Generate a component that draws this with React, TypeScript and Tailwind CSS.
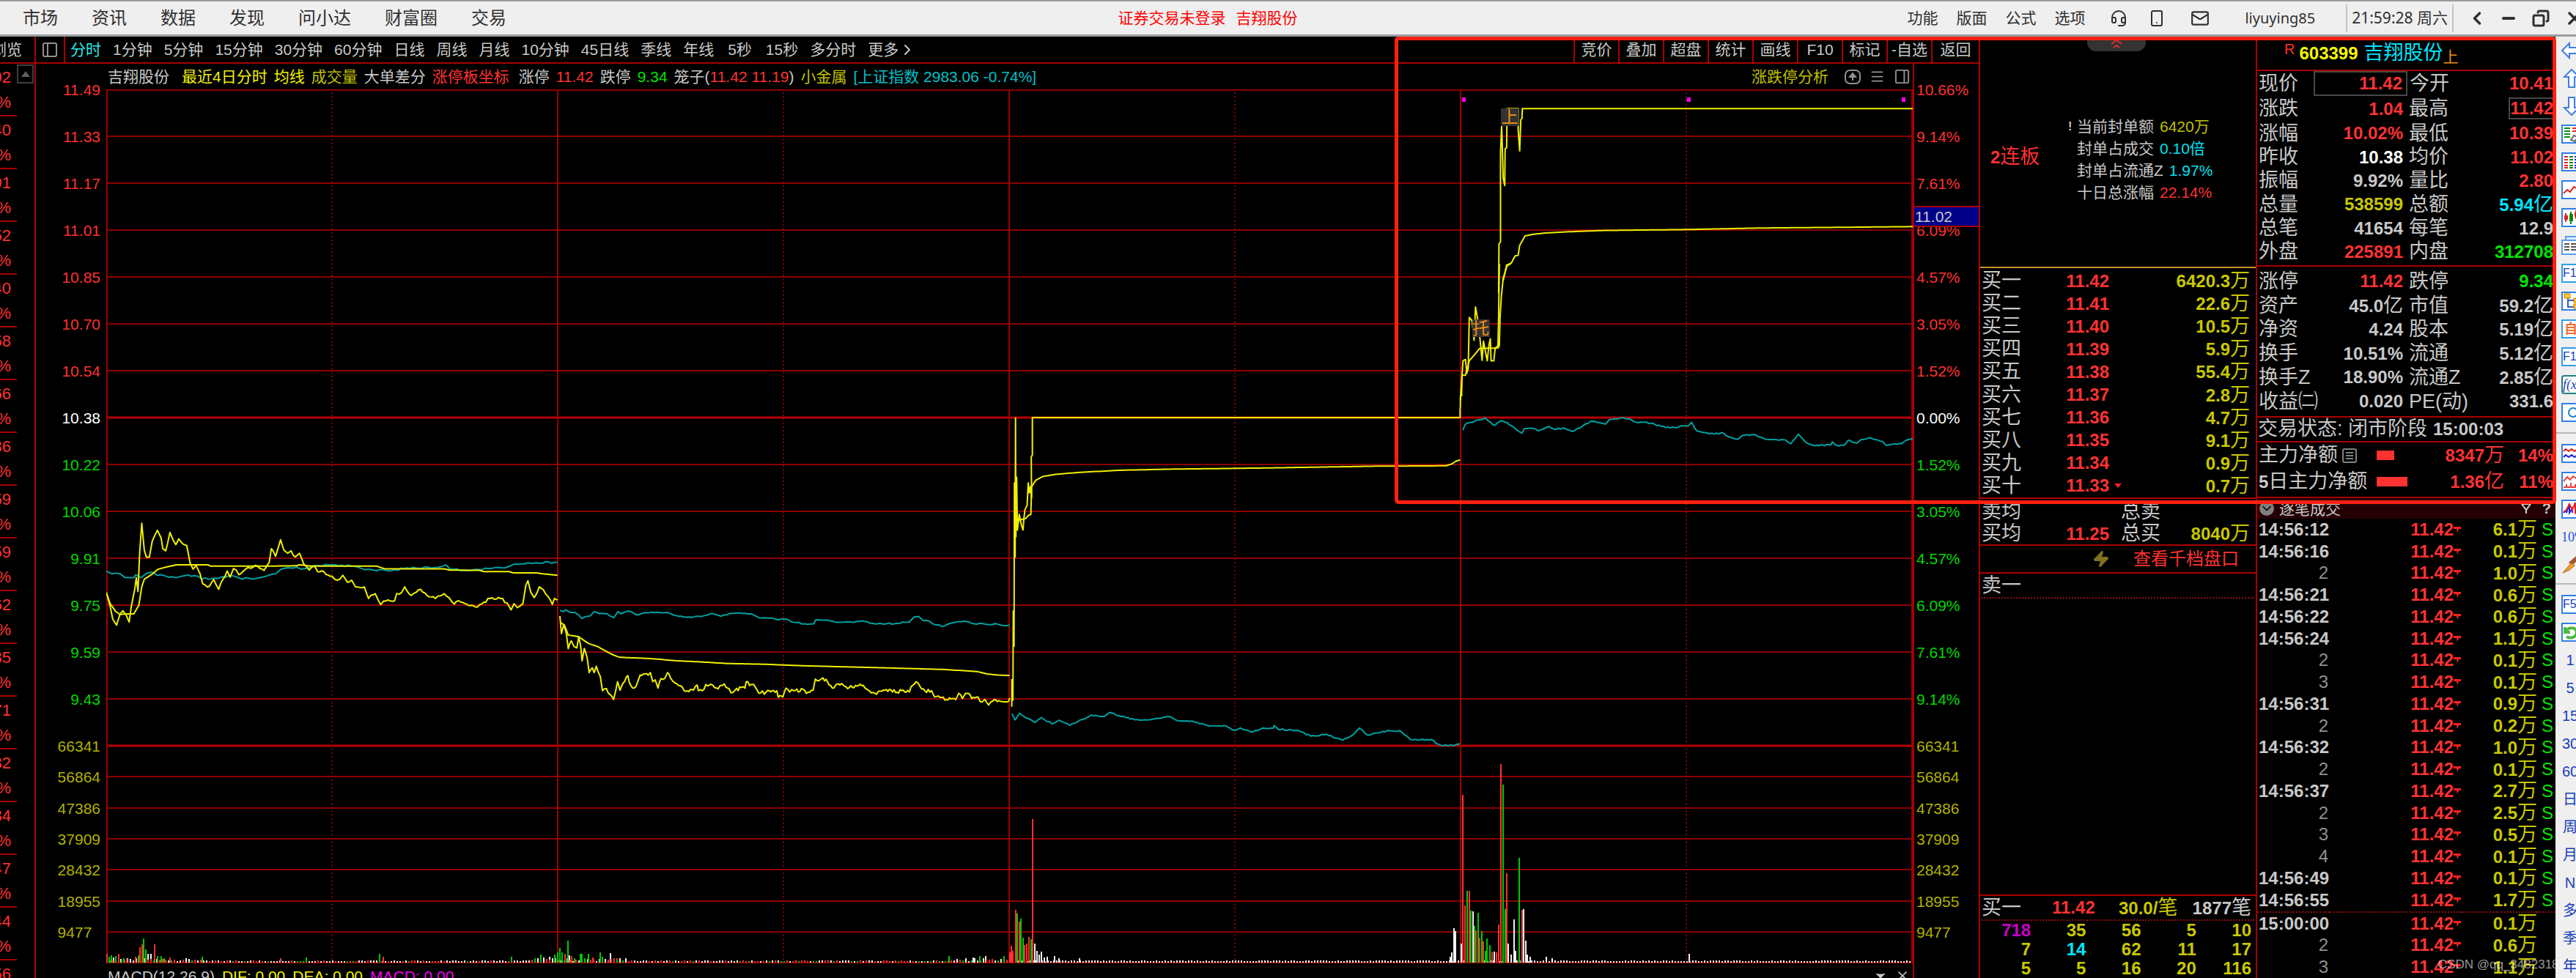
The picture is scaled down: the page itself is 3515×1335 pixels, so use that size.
import React from "react";
import { Headset, Smartphone, Mail, ChevronLeft, ChevronRight, Minus, Copy, X, ChevronDown, Zap, PanelLeft, PanelRight, Menu } from "lucide-react";

type Pt = [number, number];

const MENU = ["市场", "资讯", "数据", "发现", "问小达", "财富圈", "交易"];
const PERIODS = ["1分钟", "5分钟", "15分钟", "30分钟", "60分钟", "日线", "周线", "月线", "10分钟", "45日线", "季线", "年线", "5秒", "15秒", "多分时"];
const ACTIONS = ["竞价", "叠加", "超盘", "统计", "画线", "F10", "标记", "-自选"];
const WATCH = ["92", "40", "91", "52", "40", "58", "66", "36", "59", "59", "62", "35", "71", "32", "34", "47", "44", "56"];

const LEFT_AXIS: [string, string][] = [
  ["11.49", "text-[#ff3030]"], ["11.33", "text-[#ff3030]"], ["11.17", "text-[#ff3030]"], ["11.01", "text-[#ff3030]"],
  ["10.85", "text-[#ff3030]"], ["10.70", "text-[#ff3030]"], ["10.54", "text-[#ff3030]"], ["10.38", "text-white"],
  ["10.22", "text-[#00d800]"], ["10.06", "text-[#00d800]"], ["9.91", "text-[#00d800]"], ["9.75", "text-[#00d800]"],
  ["9.59", "text-[#00d800]"], ["9.43", "text-[#00d800]"],
];
const RIGHT_AXIS: [string, string][] = [
  ["10.66%", "text-[#ff3030]"], ["9.14%", "text-[#ff3030]"], ["7.61%", "text-[#ff3030]"], ["6.09%", "text-[#ff3030]"],
  ["4.57%", "text-[#ff3030]"], ["3.05%", "text-[#ff3030]"], ["1.52%", "text-[#ff3030]"], ["0.00%", "text-white"],
  ["1.52%", "text-[#00d800]"], ["3.05%", "text-[#00d800]"], ["4.57%", "text-[#00d800]"], ["6.09%", "text-[#00d800]"],
  ["7.61%", "text-[#00d800]"], ["9.14%", "text-[#00d800]"],
];
const VOLUMES = ["66341", "56864", "47386", "37909", "28432", "18955", "9477"];

const BIDS: [string, string, string][] = [
  ["买一", "11.42", "6420.3万"], ["买二", "11.41", "22.6万"], ["买三", "11.40", "10.5万"], ["买四", "11.39", "5.9万"],
  ["买五", "11.38", "55.4万"], ["买六", "11.37", "2.8万"], ["买七", "11.36", "4.7万"], ["买八", "11.35", "9.1万"],
  ["买九", "11.34", "0.9万"], ["买十", "11.33", "0.7万"],
];

const RED = "text-[#ff3232]";
const GRAY = "text-[#c8c8c8]";
const YEL = "text-[#c8c800]";
const GRN = "text-[#00e600]";
const CYAN = "text-[#00e6ff]";

type Quote = [string, string, string, string, string, string];
const QUOTES_A: Quote[] = [
  ["现价", "11.42", RED, "今开", "10.41", RED],
  ["涨跌", "1.04", RED, "最高", "11.42", RED],
  ["涨幅", "10.02%", RED, "最低", "10.39", RED],
  ["昨收", "10.38", "text-white", "均价", "11.02", RED],
  ["振幅", "9.92%", GRAY, "量比", "2.80", RED],
  ["总量", "538599", YEL, "总额", "5.94亿", CYAN],
  ["总笔", "41654", GRAY, "每笔", "12.9", GRAY],
  ["外盘", "225891", RED, "内盘", "312708", GRN],
];
const QUOTES_B: Quote[] = [
  ["涨停", "11.42", RED, "跌停", "9.34", GRN],
  ["资产", "45.0亿", GRAY, "市值", "59.2亿", GRAY],
  ["净资", "4.24", GRAY, "股本", "5.19亿", GRAY],
  ["换手", "10.51%", GRAY, "流通", "5.12亿", GRAY],
  ["换手Z", "18.90%", GRAY, "流通Z", "2.85亿", GRAY],
  ["收益㈡", "0.020", GRAY, "PE(动)", "331.6", GRAY],
];

const TICKS: [string, string, string][] = [
  ["14:56:12", "6.1万", "S"], ["14:56:16", "0.1万", "S"], ["2", "1.0万", "S"], ["14:56:21", "0.6万", "S"],
  ["14:56:22", "0.6万", "S"], ["14:56:24", "1.1万", "S"], ["2", "0.1万", "S"], ["3", "0.1万", "S"],
  ["14:56:31", "0.9万", "S"], ["2", "0.2万", "S"], ["14:56:32", "1.0万", "S"], ["2", "0.1万", "S"],
  ["14:56:37", "2.7万", "S"], ["2", "2.5万", "S"], ["3", "0.5万", "S"], ["4", "0.1万", "S"],
  ["14:56:49", "0.1万", "S"], ["14:56:55", "1.7万", "S"], ["15:00:00", "0.1万", ""], ["2", "0.6万", ""], ["3", "1.1万", ""],
];

/* ---------- chart helpers ---------- */

function noise(n: number) {
  const v = Math.sin(n * 12.9898) * 43758.5453;
  return v - Math.floor(v);
}

/** Joins the key points with small steps in between, as minute data has. */
function trace(pts: Pt[], amp = 0, step = 8) {
  let d = "M" + pts[0].join(" ");
  for (let i = 1; i < pts.length; i++) {
    const [x0, y0] = pts[i - 1];
    const [x1, y1] = pts[i];
    const n = Math.max(1, Math.floor((x1 - x0) / step));
    for (let k = 1; k <= n; k++) {
      const t = k / n;
      const wob = k < n ? (noise(x0 + k * 7.3) - 0.5) * 2 * amp : 0;
      d += `L${(x0 + (x1 - x0) * t).toFixed(1)} ${(y0 + (y1 - y0) * t + wob).toFixed(1)}`;
    }
  }
  return d;
}

const D1_PRICE: Pt[] = [[253,308],[262,355],[268,395],[277,415],[285,380],[292,368],[300,382],[307,405],[312,355],[320,300],[324,260],[328,305],[332,180],[337,82],[343,170],[348,193],[355,193],[362,140],[374,105],[383,130],[387,165],[394,172],[398,150],[404,112],[411,135],[418,152],[425,133],[435,150],[444,155],[452,212],[459,232],[466,220],[475,245],[482,280],[498,288],[508,266],[520,298],[530,265],[540,238],[547,258],[555,230],[568,250],[590,226],[612,222],[628,236],[640,210],[645,165],[655,190],[667,136],[675,170],[684,180],[692,172],[702,192],[712,180],[722,215],[735,235],[748,222],[755,240],[770,240],[785,255],[800,268],[808,265],[815,252],[826,275],[836,268],[845,290],[866,290],[876,328],[892,312],[905,348],[912,336],[938,336],[943,312],[955,308],[962,290],[978,318],[1000,298],[1015,318],[1035,328],[1056,312],[1080,346],[1090,335],[1110,347],[1135,356],[1150,340],[1165,328],[1190,328],[1205,342],[1215,365],[1222,345],[1230,358],[1243,345],[1250,285],[1255,270],[1262,308],[1270,325],[1282,290],[1292,300],[1302,320],[1313,347],[1318,328],[1325,333]];
const D1_AVG: Pt[] = [[253,310],[262,345],[275,370],[285,380],[305,378],[318,378],[330,350],[337,290],[343,265],[360,250],[375,233],[395,225],[420,218],[495,218],[500,222],[630,222],[640,222],[705,221],[712,218],[740,222],[895,222],[915,231],[1055,231],[1070,235],[1140,236],[1150,240],[1210,240],[1220,244],[1275,244],[1290,247],[1325,252]];
const D1_INDEX: Pt[] = [[253,238],[268,247],[285,247],[298,260],[318,260],[323,250],[335,260],[348,246],[362,242],[375,252],[392,254],[418,260],[440,253],[462,253],[480,264],[520,262],[545,253],[570,262],[605,264],[630,256],[655,247],[668,232],[690,228],[705,225],[715,232],[735,228],[750,220],[790,218],[835,222],[860,230],[925,238],[960,230],[1040,226],[1060,218],[1070,232],[1110,236],[1160,230],[1200,228],[1218,218],[1255,211],[1325,210]];

const D2_INDEX: Pt[] = [[57,150],[68,155],[75,148],[90,158],[105,158],[118,168],[128,182],[138,175],[155,172],[168,155],[185,163],[210,163],[232,178],[245,155],[255,163],[275,153],[310,168],[335,158],[405,158],[425,168],[460,176],[515,174],[545,163],[580,173],[605,163],[640,160],[675,163],[705,180],[735,180],[765,187],[790,184],[815,196],[850,202],[880,202],[886,187],[925,188],[950,196],[1045,193],[1080,203],[1150,200],[1190,195],[1205,176],[1220,174],[1235,190],[1255,192],[1275,206],[1297,212],[1330,198],[1375,193],[1400,202],[1475,203],[1485,207],[1515,207]];
const D2_AVG: Pt[] = [[57,195],[72,208],[84,245],[118,252],[150,278],[180,290],[210,310],[230,322],[250,331],[350,336],[430,344],[512,349],[600,355],[720,358],[850,364],[1020,369],[1180,374],[1300,378],[1410,386],[1440,395],[1480,400],[1515,401]];
const D2_PRICE: Pt[] = [[57,172],[62,240],[70,205],[78,240],[84,298],[94,268],[103,290],[112,295],[118,252],[124,285],[129,345],[136,297],[145,330],[152,390],[162,372],[168,390],[175,366],[188,405],[195,460],[208,452],[220,475],[231,494],[237,465],[244,425],[252,458],[262,430],[277,402],[287,440],[297,450],[308,430],[317,400],[343,400],[350,390],[358,425],[366,418],[375,450],[385,413],[397,413],[406,390],[416,412],[430,430],[442,440],[460,460],[490,458],[502,438],[506,460],[518,460],[530,436],[552,438],[565,450],[590,434],[605,452],[612,468],[625,458],[645,448],[657,450],[661,425],[672,440],[685,436],[702,470],[725,466],[745,460],[760,460],[765,485],[780,484],[790,450],[802,465],[815,460],[850,458],[856,470],[878,458],[885,415],[892,422],[905,414],[920,416],[940,450],[955,434],[975,438],[990,452],[1015,440],[1035,440],[1055,456],[1078,470],[1100,462],[1125,455],[1150,466],[1165,460],[1190,465],[1200,440],[1212,425],[1225,445],[1240,460],[1262,460],[1272,484],[1295,486],[1310,494],[1340,494],[1350,470],[1362,490],[1372,470],[1387,476],[1392,490],[1412,484],[1420,502],[1435,494],[1447,515],[1460,500],[1480,498],[1492,502],[1512,500],[1515,488]];

const D3_PRICE: Pt[] = [[158,838],[158,765],[161,820],[162,580],[164,675],[165,235],[167,435],[168,60],[169,380],[171,220],[173,362],[178,320],[184,350],[188,362],[190,335],[193,308],[199,295],[202,235],[205,262],[208,245],[211,275],[210,165],[213,160],[213,59],[1357,59],[1357,35]];
const D3_AVG: Pt[] = [[168,310],[170,345],[178,335],[195,331],[203,322],[209,320],[211,245],[222,228],[240,218],[275,212],[350,206],[450,201],[580,198],[830,195],[1130,190],[1320,189],[1335,184],[1345,177],[1357,173]];
const D3_INDEX: Pt[] = [[158,856],[167,873],[179,855],[195,867],[220,880],[237,867],[266,884],[285,874],[313,888],[345,872],[370,860],[405,864],[420,853],[450,864],[500,874],[583,865],[605,876],[640,876],[685,890],[725,888],[752,901],[770,895],[802,906],[830,895],[858,895],[860,888],[870,898],[925,902],[958,917],[1000,912],[1042,928],[1068,915],[1088,895],[1110,914],[1150,904],[1195,902],[1225,926],[1280,926],[1300,939],[1325,943],[1357,938]];

const D4_PRICE: Pt[] = [[69,318],[70,290],[73,290],[74,245],[77,213],[84,210],[88,240],[92,230],[95,118],[103,125],[109,168],[113,95],[117,112],[122,135],[128,180],[132,212],[136,170],[141,190],[147,213],[152,178],[156,165],[158,213],[166,213],[170,185],[178,180],[180,115],[182,0]];
const D4_RISE: Pt[] = [[277,1200],[278,1000],[282,990],[282,625],[285,515],[287,620],[289,730],[293,760],[294,610],[298,605],[299,445],[328,445],[328,530],[332,618],[333,575],[335,490],[338,485],[339,445],[1358,445]];
const D4_AVG: Pt[] = [[69,300],[74,245],[84,245],[95,213],[110,200],[125,186],[178,185],[182,180],[184,118],[188,70],[193,32],[204,5],[215,0]];
const D4_AVG_LATE: Pt[] = [[289,1150],[298,1085],[310,1078],[320,1048],[328,1046],[332,1005],[346,966],[365,960],[400,954],[445,950],[545,944],[770,940],[950,934],[1235,930],[1358,928]];
const D4_INDEX: Pt[] = [[76,365],[84,352],[105,348],[118,343],[132,342],[140,338],[150,345],[168,355],[185,345],[205,349],[225,360],[247,372],[255,362],[275,361],[295,367],[325,357],[340,363],[370,361],[392,368],[420,358],[445,346],[490,352],[500,342],[535,338],[560,341],[578,348],[620,350],[650,357],[690,360],[712,356],[728,356],[738,348],[752,366],[790,373],[830,372],[845,380],[872,385],[885,377],[920,375],[950,385],[1010,387],[1025,395],[1047,374],[1068,392],[1090,399],[1140,398],[1145,391],[1158,399],[1178,399],[1190,388],[1215,394],[1228,386],[1255,382],[1290,390],[1302,399],[1345,395],[1365,386],[1377,385]];

type Bar = [number, number, "r" | "g" | "w"];
const BIG_BARS: Bar[] = [
  [1,12,"r"],[4,8,"g"],[7,10,"g"],[10,7,"w"],[13,9,"g"],[17,12,"r"],[20,5,"w"],[24,6,"g"],[28,5,"r"],[40,8,"r"],[44,10,"g"],[46,21,"r"],[49,25,"r"],[51,33,"g"],[54,18,"g"],[57,12,"w"],[61,12,"w"],[66,25,"r"],[70,9,"g"],[75,9,"g"],[79,6,"g"],[87,7,"r"],
  [131,8,"g"],[238,6,"r"],[273,7,"g"],[373,12,"g"],[378,8,"r"],[553,8,"g"],[585,6,"g"],[593,11,"g"],[597,7,"w"],[605,8,"w"],[612,11,"g"],
  [616,14,"g"],[619,20,"g"],[622,14,"g"],[626,12,"r"],[630,30,"g"],[632,10,"w"],[635,9,"r"],[639,6,"g"],[647,12,"g"],[649,12,"g"],[653,6,"g"],[658,12,"g"],[664,7,"r"],[674,14,"g"],[677,8,"g"],[688,13,"w"],[693,6,"r"],[697,6,"r"],
  [1150,9,"g"],[1183,7,"w"],[1192,9,"g"],[1200,9,"w"],[1225,9,"g"],
  [1233,14,"r"],[1235,23,"r"],[1237,16,"r"],[1241,72,"r"],[1243,67,"g"],[1246,56,"r"],[1248,60,"g"],[1251,34,"g"],[1253,24,"r"],[1256,26,"r"],[1259,35,"r"],[1262,32,"g"],[1264,196,"r"],[1267,26,"w"],[1270,16,"w"],[1273,11,"w"],[1276,15,"w"],[1280,7,"w"],[1284,8,"w"],[1294,9,"w"],[1300,6,"w"],[1328,6,"w"],
  [1834,8,"w"],[1836,14,"w"],[1839,47,"w"],[1841,43,"w"],[1849,26,"w"],[1851,229,"r"],[1854,78,"r"],[1857,98,"g"],[1860,98,"r"],[1862,71,"g"],[1865,70,"w"],[1867,50,"g"],[1869,44,"r"],[1872,68,"g"],[1874,34,"r"],[1877,43,"g"],[1879,29,"r"],[1882,16,"g"],[1884,33,"g"],[1888,24,"g"],[1891,15,"r"],[1894,15,"w"],[1897,14,"r"],[1900,52,"r"],[1903,271,"r"],[1906,243,"g"],[1909,73,"g"],[1911,122,"r"],[1913,26,"w"],[1917,11,"w"],[1921,59,"w"],[1923,16,"w"],[1928,143,"g"],[1932,72,"r"],[1934,73,"w"],[1937,30,"w"],[1939,11,"w"],[1943,8,"w"],[1965,8,"w"],[1973,6,"w"],[2160,12,"w"],
];
const FLOOR_BARS: Bar[] = Array.from({ length: 616 }, (_, i): Bar => {
  const x = i * 4 + 1;
  const n = noise(i + 3);
  const late = x > 1240;
  const busy = !late && (x < 130 || (x > 580 && x < 710) || x > 1160);
  const h = busy ? 2 + n * 4 : 2 + n;
  const c = late || n > 0.72 ? "w" : n > 0.4 ? "r" : n > 0.28 ? "g" : "w";
  return [x, Math.round(h), c];
});
const barPath = (c: string) =>
  [...FLOOR_BARS, ...BIG_BARS].filter((b) => b[2] === c).map(([x, h]) => `M${x} 1192v-${h}`).join("");

function Curve({ d, color }: { d: string; color: string }) {
  return <path d={d} stroke={color} strokeWidth={2} fill="none" vectorEffect="non-scaling-stroke" strokeLinejoin="round" />;
}

function Chart() {
  const days = [1, 616, 1232, 1848, 2464];
  const mids = [308, 924, 1540, 2156];
  const Y = "#f0f000";
  const C = "#00a0a0";
  return (
    <svg viewBox="0 0 2465 1193" preserveAspectRatio="none" className="block h-[1193px] w-full" role="img" aria-label="分时走势">
      {Array.from({ length: 15 }, (_, i) => (
        <path key={i} d={`M0 ${i === 0 ? 1 : i * 64}H2465`} stroke={i === 7 || i === 14 ? "#b80000" : "#8c0000"} strokeWidth={i === 7 || i === 14 ? 3 : 2} />
      ))}
      {Array.from({ length: 7 }, (_, i) => (
        <path key={i} d={`M0 ${Math.round(896 + (i + 1) * 42.3)}H2465`} stroke="#8c0000" strokeWidth={2} />
      ))}
      {days.map((x) => <path key={x} d={`M${x} 0V1193`} stroke="#9c0000" strokeWidth={2} />)}
      {mids.map((x) => <path key={x} d={`M${x} 4V1193`} stroke="#8c0000" strokeWidth={2} strokeDasharray="2 3.3" />)}
      <path d={barPath("w")} stroke="#f0f0f0" strokeWidth={2} />
      <path d={barPath("r")} stroke="#ff3232" strokeWidth={2} />
      <path d={barPath("g")} stroke="#00c800" strokeWidth={2} />
      <g transform="translate(-145 558) scale(0.574 0.4177)">
        <Curve d={trace(D1_INDEX, 3, 7)} color={C} />
        <Curve d={trace(D1_AVG)} color={Y} />
        <Curve d={trace(D1_PRICE, 5, 5)} color={Y} />
      </g>
      <g transform="translate(595 658) scale(0.4209 0.354)">
        <Curve d={trace(D2_INDEX, 3, 8)} color={C} />
        <Curve d={trace(D2_AVG)} color={Y} />
        <Curve d={trace(D2_PRICE, 7, 5)} color={Y} />
      </g>
      <g transform="translate(1155 418) scale(0.5102 0.507)">
        <Curve d={trace(D3_INDEX, 2, 6)} color={C} />
        <Curve d={trace(D3_AVG)} color={Y} />
        <Curve d={trace(D3_PRICE)} color={Y} />
      </g>
      <g transform="translate(1815 238) scale(0.4719 0.6218)">
        <Curve d={trace(D4_INDEX, 1.5, 6)} color={C} />
        <Curve d={trace(D4_AVG)} color={Y} />
        <Curve d={trace(D4_PRICE)} color={Y} />
      </g>
      <g transform="translate(1755 -122) scale(0.523 0.3333)">
        <Curve d={trace(D4_RISE)} color={Y} />
        <Curve d={trace(D4_AVG_LATE)} color={Y} />
      </g>
      {[1850, 2157, 2450].map((x) => <rect key={x} x={x} y={11} width={5} height={6} fill="#ff00ff" />)}
    </svg>
  );
}

/* ---------- small parts ---------- */

/** Figures are bold, Chinese units are regular and slightly larger. */
function Mixed({ text }: { text: string }) {
  return (
    <>
      {text.split(/([\u4e00-\u9fff]+)/).filter(Boolean).map((s, i) =>
        /[\u4e00-\u9fff]/.test(s)
          ? <span key={i} className="text-[27px] font-normal">{s}</span>
          : <span key={i} className="text-[24px] font-bold">{s}</span>
      )}
    </>
  );
}

function Mark({ label, children }: { label: string; children: React.ReactNode }) {
  return (
    <button aria-label={label} className="flex h-[38px] shrink-0 items-center">
      <svg viewBox="0 0 28 26" className="h-[26px] w-[28px] shrink-0" fill="none">{children}</svg>
    </button>
  );
}

const Frame = ({ color = "#2f7fe8" }: { color?: string }) => <rect x="1" y="1" width="27" height="24" fill="#fff" stroke={color} strokeWidth="2" />;

function ToolStrip() {
  const arrow = { fill: "#fff", stroke: "#3f7fe0", strokeWidth: 2 };
  return (
    <aside className="flex w-[28px] shrink-0 flex-col overflow-hidden bg-[#efefef]">
      <div className="flex flex-col items-start pl-[8px] text-[22px] leading-none text-[#1840b8]">
        <Mark label="后退"><path {...arrow} d="M1 13 11 3v6h16v8H11v6z" /></Mark>
        <Mark label="上移"><path {...arrow} d="M14 1 24 11h-6v14h-8V11H4z" /></Mark>
        <Mark label="下移"><path {...arrow} d="M14 25 24 15h-6V1h-8v14H4z" /></Mark>
        <Mark label="报价"><Frame /><path d="M4 5h8M4 9h8M4 13h8M4 17h8" stroke="#0a8a0a" strokeWidth="2" /><path d="M15 5h8M15 9h8" stroke="#e02020" strokeWidth="2" /><path d="M13 21l4-6 5 2-3 6z" stroke="#666" strokeWidth="2" /></Mark>
        <Mark label="行情"><Frame /><path d="M4 6h5M4 10h5M4 14h5M4 18h5M4 21h5" stroke="#e02020" strokeWidth="2" /><path d="M11 6h5M11 10h5M11 14h5M11 18h5M11 21h5" stroke="#0a8a0a" strokeWidth="2" /><path d="M18 6h5M18 10h5M18 14h5M18 18h5M18 21h5" stroke="#2020e0" strokeWidth="2" /></Mark>
        <Mark label="分时图"><Frame /><path d="M3 18l5-5 4 3 5-7 4 2 4-5" stroke="#e02020" strokeWidth="2" /></Mark>
        <Mark label="K线图"><Frame /><path d="M6 7v12M20 3v12" stroke="#e02020" strokeWidth="2" /><path d="M4 10h5v6H4zM18 6h5v6h-5z" fill="#e02020" /><path d="M13 5v17" stroke="#0a8a0a" strokeWidth="2" /><path d="M11 8h5v10h-5z" fill="#0a8a0a" /></Mark>
        <Mark label="资讯"><rect x="6" y="1" width="22" height="20" fill="#dcebff" stroke="#5b9cf0" strokeWidth="2" /><rect x="1" y="6" width="26" height="19" fill="#fff" stroke="#5b9cf0" strokeWidth="2" /><path d="M4 11h7M13 11h7M4 15h7M13 15h7M4 19h7M13 19h7" stroke="#555" strokeWidth="2" /></Mark>
        <button className="my-[6px] h-[26px] w-[32px] shrink-0 border-2 border-[#2f9fe8] bg-white text-left text-[16px] leading-[22px]">F10</button>
        <Mark label="板块"><Frame /><path d="M9 6v15h9M9 12h9" stroke="#3060c0" strokeWidth="2" /><path d="M4 3h8v6H4zM17 9h8v6h-8zM17 17h8v6h-8z" fill="#ffc830" stroke="#c08000" /></Mark>
        <button className="my-[6px] h-[26px] w-[32px] shrink-0 border-2 border-[#2f9fe8] bg-white pl-[2px] text-left text-[18px] font-bold leading-[22px] text-[#f07030]">自</button>
        <button className="my-[6px] h-[26px] w-[32px] shrink-0 border-2 border-[#2f9fe8] bg-white text-left text-[16px] leading-[22px]">F12</button>
        <button className="my-[6px] h-[26px] w-[32px] shrink-0 rounded border-2 border-[#208080] bg-white text-left font-['Liberation_Serif',serif] text-[18px] italic leading-[22px]">f(x)</button>
        <Mark label="刷新"><Frame /><circle cx="16" cy="13" r="6" stroke="#2080c0" strokeWidth="2" /></Mark>
      </div>
      <hr className="my-[8px] border-t-2 border-[#b8b8b8]" />
      <div className="flex flex-col items-start pl-[8px] text-[22px] leading-none text-[#1840b8]">
        <Mark label="双线"><Frame /><path d="M3 10l3-3 4 3 4-3 4 3 4-3 4 3" stroke="#e02020" strokeWidth="2" /><path d="M3 18l3-3 4 3 4-3 4 3 4-3 4 3" stroke="#2020e0" strokeWidth="2" /></Mark>
        <Mark label="面积"><Frame /><path d="M3 13l5-6 4 4 4-5 9 6M3 21h22M7 21v-4M13 21v-6M19 21v-4" stroke="#e84040" strokeWidth="2" /></Mark>
        <Mark label="波动"><Frame /><path d="M3 18l4-4v4l4-12v12l4-6v6" stroke="#2020e0" strokeWidth="2" /><path d="M3 17l4-3 4-8 4 8 4-10v14l6-6" stroke="#e02020" strokeWidth="2" /></Mark>
        <button className="h-[38px] font-['Liberation_Sans_Narrow','Liberation_Serif',serif] text-[18px] text-[#2850e0]">10%</button>
        <Mark label="画笔"><path d="M26 0 12 12" stroke="#a05838" strokeWidth="6" /><path d="M14 10 2 24l9-4 7-6z" fill="#f0a020" stroke="#a86010" /></Mark>
      </div>
      <hr className="mb-[8px] mt-[6px] border-t-2 border-[#b8b8b8]" />
      <div className="flex flex-col items-start pl-[8px] text-[22px] leading-none text-[#1840b8]">
        <button className="my-[6px] h-[26px] w-[32px] shrink-0 border-2 border-[#2f7fe8] bg-white text-left text-[16px] leading-[22px]">F5</button>
        <Mark label="更新"><Frame /><path d="M5 6v7h7M6 12c4-7 14-6 15 1-1 8-9 9-14 6" stroke="#50b840" strokeWidth="4" /></Mark>
        {["1", "5", "15", "30", "60", "日", "周", "月", "N", "多", "季", "年"].map((t) => (
          <button key={t} className="flex h-[38px] w-[24px] shrink-0 items-center justify-center whitespace-nowrap text-[20px]">{t}</button>
        ))}
      </div>
    </aside>
  );
}

function TitleBar() {
  return (
    <header className="flex h-[50px] shrink-0 items-center whitespace-nowrap border-b-[3px] border-t-2 border-b-[#9aa0a0] border-t-[#a0989c] bg-[#efefef] text-[21px] text-[#303030]">
      <nav className="flex w-[43.4%] shrink-0 items-center gap-[46px] pl-[31px] text-[24px]">
        {MENU.map((m) => <button key={m}>{m}</button>)}
      </nav>
      <p className="flex flex-1 gap-[14px] text-[#ff0000]"><span>证券交易未登录</span><span>吉翔股份</span></p>
      <div className="flex h-full shrink-0 items-center justify-end">
        <div className="flex gap-[25px]">{["功能", "版面", "公式", "选项"].map((m) => <button key={m}>{m}</button>)}</div>
        <button aria-label="客服" className="ml-[34px]"><Headset size={24} /></button>
        <button aria-label="手机" className="ml-[28px]"><Smartphone size={24} /></button>
        <button aria-label="消息" className="ml-[34px]"><Mail size={26} /></button>
        <button className="ml-[48px] font-['Noto_Sans',sans-serif] text-[20px]">liyuying85</button>
        <time className="ml-[42px] flex h-[38px] items-center border-x-2 border-[#c4c4c4] px-[6px] font-['Noto_Sans','Noto_Sans_CJK_SC',sans-serif] text-[21px]">21:59:28 周六</time>
        <button aria-label="收起" className="ml-[18px]"><ChevronLeft size={28} strokeWidth={3} /></button>
        <button aria-label="最小化" className="ml-[17px]"><Minus size={24} strokeWidth={4} /></button>
        <button aria-label="还原" className="ml-[20px]"><Copy size={24} strokeWidth={3} className="-scale-x-100" /></button>
        <button aria-label="关闭" className="-mr-[12px] ml-[20px]"><X size={28} strokeWidth={3} /></button>
      </div>
    </header>
  );
}

function QuoteTable({ rows, className }: { rows: Quote[]; className: string }) {
  return (
    <table className={`w-full table-fixed border-collapse whitespace-nowrap leading-none ${className}`}>
      <colgroup><col className="w-[78px]" /><col className="w-[126px]" /><col className="w-[80px]" /><col /></colgroup>
      <tbody>
        {rows.map(([a, av, ac, b, bv, bc]) => (
          <tr key={a}>
            <th className="p-0 pl-[2px] text-left text-[27px] font-normal text-[#c8c8c8]">{a}</th>
            <td className={`p-0 pr-[5px] text-right ${ac} ${a === "现价" ? "border-2 border-[#484848]" : ""}`}><Mixed text={av} /></td>
            <th className="p-0 pl-[3px] text-left text-[27px] font-normal text-[#c8c8c8]">{b}</th>
            <td className={`p-0 pr-[3px] text-right ${bc}`}>
              {b === "最高" ? <span className="inline-block border-2 border-r-0 border-[#484848] py-[1px]"><Mixed text={bv} /></span> : <Mixed text={bv} />}
            </td>
          </tr>
        ))}
      </tbody>
    </table>
  );
}

function Axis({ rows, className }: { rows: [string, string][]; className: string }) {
  return (
    <div className={`flex flex-col pt-[3px] text-[21px] leading-none ${className}`}>
      {rows.map(([t, c], i) => <span key={i} className={`flex h-[64px] shrink-0 items-center ${c}`}>{t}</span>)}
      <div className="mt-[11px] flex h-[297px] shrink-0 flex-col text-[#b0b000]">
        {VOLUMES.map((v) => <span key={v} className="flex flex-1 items-center">{v}</span>)}
      </div>
    </div>
  );
}

function ChartPane() {
  return (
    <main className="flex min-w-0 flex-1 flex-col">
      <div className="flex h-[37px] shrink-0 border-b-2 border-[#a80000] text-[21px] text-[#c8c8c8]">
        <button aria-label="侧栏" className="flex w-[40px] shrink-0 items-center justify-center border-r-2 border-[#a80000]"><PanelLeft size={24} color="#909090" /></button>
        <nav className="flex flex-1 items-center gap-[16px] whitespace-nowrap pl-[7px]">
          <button className="text-[#30e8e8]">分时</button>
          {PERIODS.map((p) => <button key={p} className={p.endsWith("秒") ? "pl-[3px]" : ""}>{p}</button>)}
          <button className="flex items-center">更多<ChevronRight size={24} strokeWidth={2} /></button>
        </nav>
        {ACTIONS.map((a) => <button key={a} className="w-[61px] shrink-0 whitespace-nowrap border-l-2 border-[#a80000]">{a}</button>)}
        <button className="w-[65px] shrink-0 border-l-2 border-[#a80000]">返回</button>
      </div>
      <div className="flex min-h-0 flex-1">
        <Axis rows={LEFT_AXIS} className="w-[96px] shrink-0 items-end pr-[8px]" />
        <div className="min-w-0 flex-1">
          <div className="flex h-[35px] items-center whitespace-nowrap pl-[2px] text-[21px] text-[#c8c8c8]">
            <div className="flex flex-1 items-center gap-[9px]">
              <span className="mr-[8px]">吉翔股份</span>
              <span className="text-[#f0f000]">最近4日分时</span>
              <span className="text-[#f0f000]">均线</span>
              <span className="text-[#c0c000]">成交量</span>
              <span>大单差分</span>
              <span className="mr-[4px] text-[#ff3232]">涨停板坐标</span>
              <span>涨停</span><span className="text-[#ff3232]">11.42</span>
              <span>跌停</span><span className="text-[#00e000]">9.34</span>
              <span>笼子(<span className="text-[#ff3232]">11.42 11.19</span>)</span>
              <span className="text-[#c0c000]">小金属</span>
              <span className="text-[#00c0c8]">[上证指数 2983.06 -0.74%]</span>
            </div>
            <button className="text-[#c0c000]">涨跌停分析</button>
            <div className="ml-[22px] mr-[3px] flex items-center gap-[12px] text-[#909090]">
              <button aria-label="上移"><svg viewBox="0 0 22 22" className="size-[22px]" fill="none" stroke="currentColor" strokeWidth="2"><rect x="1" y="2" width="20" height="18" rx="6" /><path d="M11 16V8M7 11l4-5 4 5z" fill="currentColor" /></svg></button>
              <button aria-label="列表"><Menu size={21} /></button>
              <button aria-label="右侧栏"><PanelRight size={23} /></button>
            </div>
          </div>
          <div className="relative">
            <Chart />
            <span className="absolute left-[77.2%] top-[26px] size-[24px] bg-[#333] text-center text-[23px] leading-[24px] text-[#f09010]">上</span>
            <span className="absolute left-[75.6%] top-[314px] size-[24px] bg-[#333] text-center text-[23px] leading-[24px] text-[#f09010]">托</span>
          </div>
          <div className="flex h-[34px] items-center gap-[10px] whitespace-nowrap pl-[2px] text-[21px] leading-none text-[#c8c8c8]">
            <span>MACD(12,26,9)</span>
            <span className="text-[#f0f000]">DIF: 0.00</span>
            <span className="text-[#f0f000]">DEA: 0.00</span>
            <span className="flex-1 text-[#f000f0]">MACD: 0.00</span>
            <ChevronDown size={20} fill="currentColor" /><X size={20} className="mr-[4px]" />
          </div>
        </div>
        <div className="relative w-[90px] shrink-0 border-l-2 border-[#a80000]">
          <Axis rows={RIGHT_AXIS} className="items-start pl-[3px]" />
          <span className="absolute inset-x-0 top-[194px] flex h-[29px] items-center border-y-2 border-[#a80000] bg-[#000088] pl-[1px] text-[21px] leading-none text-[#c8c8c8]">11.02</span>
        </div>
      </div>
    </main>
  );
}

function OrderBook() {
  const facts: [string, string, string][] = [
    ["当前封单额", "6420万", "text-[#c0c000]"], ["封单占成交", "0.10倍", "text-[#00e0f0]"],
    ["封单占流通Z", "1.97%", "text-[#00e0f0]"], ["十日总涨幅", "22.14%", "text-[#ff3232]"],
  ];
  const lots = [["718", "35", "56", "5", "10"], ["7", "14", "62", "11", "17"], ["5", "5", "16", "20", "116"]];
  return (
    <section className="flex w-[378px] shrink-0 flex-col border-l-2 border-[#a80000]">
      <div className="relative flex h-[316px] shrink-0 items-center border-b-2 border-[#c89030] pl-[14px]">
        <button aria-label="折叠" className="absolute left-[146px] top-0 flex h-[20px] w-[80px] items-center justify-center rounded-b-[12px] bg-[#333]">
          <svg viewBox="0 0 16 12" className="h-[12px] w-[16px]" fill="none" stroke="#e03030" strokeWidth="2"><path d="M1 6l7-5 7 5M4 11l4-3 4 3" /></svg>
        </button>
        <p className="mt-[14px] w-[106px] text-[27px] leading-none text-[#ff3232]"><b className="text-[24px]">2</b>连板</p>
        <dl className="mt-[22px] text-[21px] leading-[30px] text-[#c8c8c8]">
          {facts.map(([k, v, c], i) => (
            <div key={k} className="flex gap-[8px]">
              <dt className="flex items-center whitespace-nowrap"><span aria-hidden="true" className="w-[12px] text-[16px] font-bold leading-none">{i === 0 ? "!" : ""}</span>{k}</dt>
              <dd className={c}>{v}</dd>
            </div>
          ))}
        </dl>
      </div>
      <table className="mt-[2px] h-[316px] w-full table-fixed border-collapse whitespace-nowrap leading-none">
        <colgroup><col className="w-[100px]" /><col className="w-[80px]" /><col /></colgroup>
        <tbody>
          {BIDS.map(([n, p, v]) => (
            <tr key={n}>
              <th className="p-0 pl-[2px] text-left text-[27px] font-normal text-[#c8c8c8]">{n}</th>
              <td className="p-0 pr-[4px] text-right text-[#ff3232]"><Mixed text={p} /></td>
              <td className="p-0 pr-[8px] text-[#c8c800]">
                <div className="flex items-center justify-between">
                  <svg viewBox="0 0 10 6" className="ml-[3px] h-[6px] w-[10px]">{n === "买十" && <path d="M0 0h10L5 6z" fill="#ff2020" />}</svg>
                  <span><Mixed text={v} /></span>
                </div>
              </td>
            </tr>
          ))}
        </tbody>
      </table>
      <div className="flex h-[66px] shrink-0 flex-col border-b-2 border-t-2 border-[#a80000] pt-[2px]">
        <table className="h-[60px] w-full table-fixed border-collapse whitespace-nowrap leading-none">
          <tbody className="text-[27px] text-[#c8c8c8]">
            <tr><th className="w-[100px] p-0 pl-[2px] text-left font-normal">卖均</th><td className="w-[80px] p-0" /><th className="w-[76px] p-0 pl-[12px] text-left font-normal">总卖</th><td className="p-0" /></tr>
            <tr><th className="p-0 pl-[2px] text-left font-normal">买均</th><td className="p-0 pr-[4px] text-right text-[#ff3232]"><Mixed text="11.25" /></td><th className="p-0 pl-[12px] text-left font-normal">总买</th><td className="p-0 pr-[8px] text-right text-[#c8c800]"><Mixed text="8040万" /></td></tr>
          </tbody>
        </table>
      </div>
      <div className="flex h-[38px] shrink-0 items-center justify-end gap-[32px] border-b-2 border-[#a80000] pr-[23px]">
        <Zap size={24} fill="#807020" color="#807020" />
        <button className="text-[24px] leading-none text-[#ff3232]">查看千档盘口</button>
      </div>
      <div className="mx-[2px] flex h-[34px] shrink-0 items-center border-b-2 border-dotted border-[#901010] text-[27px] leading-none text-[#c8c8c8]">卖一</div>
      <div className="h-[404px] shrink-0" />
      <div className="flex h-[34px] shrink-0 items-center whitespace-nowrap border-t-2 border-[#a80000] px-[2px] leading-none text-[#c8c8c8]">
        <span className="w-[96px] text-[27px]">买一</span>
        <span className="w-[91px] text-[#ff3232]"><Mixed text="11.42" /></span>
        <span className="flex-1 text-[#c8c800]"><Mixed text="30.0/笔" /></span>
        <span className="pr-[4px]"><Mixed text="1877笔" /></span>
      </div>
      <div className="mx-[2px] shrink-0 border-b-2 border-dotted border-[#901010]" />
      <table className="w-full table-fixed border-collapse text-[24px] font-bold leading-[26px] text-[#c8c800]">
        <tbody>
          {lots.map((r, i) => (
            <tr key={i}>{r.map((v, k) => <td key={k} className={`p-0 pr-[6px] text-right ${v === "718" ? "text-[#c800c8]" : v === "14" ? "text-[#00e6ff]" : ""}`}>{v}</td>)}</tr>
          ))}
        </tbody>
      </table>
    </section>
  );
}

function InfoPane() {
  return (
    <section className="flex w-[409px] shrink-0 flex-col border-l-2 border-[#a80000]">
      <h1 className="flex h-[47px] shrink-0 items-center whitespace-nowrap border-b-2 border-[#a80000] pl-[37px] leading-none">
        <span className="mb-[12px] mr-[6px] text-[20px] text-[#ff3030]">R</span>
        <span className="mr-[8px] text-[24px] font-bold text-[#f8f800]">603399</span>
        <span className="text-[27px] text-[#00e6ff]">吉翔股份</span>
        <span className="mt-[10px] text-[21px] text-[#f09010]">上</span>
      </h1>
      <QuoteTable rows={QUOTES_A} className="h-[265px]" />
      <div className="mt-[2px] border-t-2 border-[#a80000]" />
      <QuoteTable rows={QUOTES_B} className="mt-[4px] h-[198px]" />
      <p className="mt-[3px] flex h-[36px] shrink-0 items-center gap-[8px] whitespace-nowrap border-y-2 border-[#a80000] pl-[1px] text-[27px] leading-none text-[#c8c8c8]">
        <span>交易状态: 闭市阶段</span><Mixed text="15:00:03" />
      </p>
      <table className="h-[73px] w-full table-fixed border-collapse whitespace-nowrap leading-none text-[#ff3232]">
        <tbody>
          <tr>
            <th className="w-[163px] p-0 pl-[2px] text-left text-[27px] font-normal text-[#c8c8c8]"><div className="flex items-center gap-[6px]">主力净额<svg viewBox="0 0 20 20" className="size-[20px]" fill="none" stroke="#808080" strokeWidth="2"><rect x="1" y="1" width="18" height="18" rx="2" /><path d="M5 6h10M5 10h10M5 14h10" /></svg></div></th>
            <td className="w-[50px] p-0"><div className="h-[13px] w-[24px] bg-[#ff3232]" /></td>
            <td className="p-0 text-right"><Mixed text="8347万" /></td>
            <td className="w-[70px] p-0 pr-[3px] text-right"><Mixed text="14%" /></td>
          </tr>
          <tr>
            <th className="p-0 pl-[2px] text-left text-[27px] font-normal text-[#c8c8c8]"><span className="text-[24px] font-bold">5</span>日主力净额</th>
            <td className="p-0"><div className="h-[13px] w-[42px] bg-[#ff3232]" /></td>
            <td className="p-0 text-right"><Mixed text="1.36亿" /></td>
            <td className="p-0 pr-[3px] text-right"><Mixed text="11%" /></td>
          </tr>
        </tbody>
      </table>
      <div className="mt-[2px] flex h-[30px] shrink-0 items-center gap-[7px] border-t-2 border-[#a80000] bg-[#240004] pl-[3px] pr-[6px] text-[21px] leading-none text-[#c8c8c8]">
        <button aria-label="展开" className="rounded-full bg-[#808080] text-black"><ChevronDown size={20} /></button>
        <h2 className="flex-1">逐笔成交</h2>
        <button aria-label="筛选"><svg viewBox="0 0 14 14" className="size-[14px]" fill="none" stroke="#d0d0d0" strokeWidth="2"><path d="M1 1h12L7 9zM7 8v6" /></svg></button>
        <button aria-label="帮助" className="ml-[8px] text-[20px] font-bold">?</button>
      </div>
      <table className="h-[627px] w-full shrink-0 table-fixed border-collapse whitespace-nowrap leading-none">
        <tbody>
          {TICKS.map(([t, v, s], i) => (
            <tr key={i} className={t === "15:00:00" ? "border-t-2 border-dotted border-[#901010]" : ""}>
              <td className={`w-[99px] p-0 pl-[2px] pr-[2px] text-right text-[24px] ${t.length > 1 ? "font-bold text-[#c8c8c8]" : "text-[#909090]"}`}>{t}</td>
              <td className="w-[179px] p-0 text-right text-[#ff3232]">
                <span className="inline-flex items-center"><Mixed text="11.42" /><svg viewBox="0 0 10 8" className="h-[8px] w-[10px]"><path d="M0 0h10v3H7L5 8 4 3H0z" fill="#ff2020" /></svg></span>
              </td>
              <td className="p-0 text-right text-[#c8c800]"><Mixed text={v} /></td>
              <td className="w-[25px] p-0 pr-[3px] text-right text-[24px] text-[#00e600]">{s}</td>
            </tr>
          ))}
        </tbody>
      </table>
    </section>
  );
}

function WatchStrip() {
  return (
    <aside className="w-[49px] shrink-0 border-r-2 border-[#a80000]">
      <div className="flex h-[37px] items-center justify-end overflow-hidden border-b-2 border-[#a80000] pr-[17px] text-[21px] text-[#c8c8c8]"><span className="whitespace-nowrap">浏览</span></div>
      <div className="flex">
        <ul className="w-[23px] text-[22px] leading-[34px] text-[#ff3030]">
          {WATCH.map((w, i) => (
            <li key={i} className="flex h-[72px] flex-col items-end overflow-hidden border-b-2 border-[#a80000] pr-[8px] pt-[2px]">
              <span>{w}</span><span>%</span>
            </li>
          ))}
        </ul>
        <button aria-label="向上滚动" className="mt-[1px] flex h-[26px] w-[23px] items-center justify-center border-2 border-[#404040]">
          <svg viewBox="0 0 12 8" className="h-[8px] w-[12px]"><path d="M6 0l6 8H0z" fill="#606060" /></svg>
        </button>
      </div>
    </aside>
  );
}

export default function App() {
  return (
    <div className="flex h-screen flex-col overflow-hidden bg-black font-['Liberation_Sans','Noto_Sans_CJK_SC',sans-serif]">
      <TitleBar />
      <div className="relative flex min-h-0 flex-1 overflow-hidden">
        <WatchStrip />
        <ChartPane />
        <OrderBook />
        <InfoPane />
        <ToolStrip />
        <div className="pointer-events-none absolute right-[27px] top-0 h-[638px] w-[1585px] rounded-[5px] border-[5px] border-[#ff2010]" />
        <p className="absolute bottom-[10px] right-[14px] text-[17px] leading-none text-white/60">CSDN @qq_34823185</p>
      </div>
    </div>
  );
}
